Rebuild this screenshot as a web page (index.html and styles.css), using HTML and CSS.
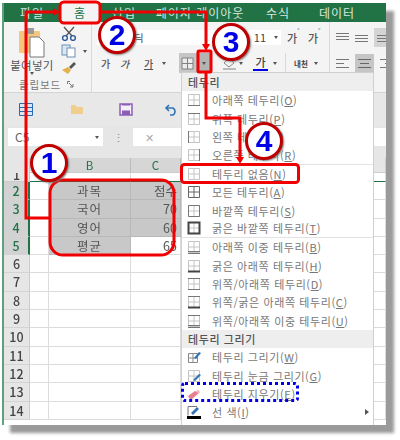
FILE: index.html
```html
<!doctype html>
<html lang="ko">
<head>
<meta charset="utf-8">
<title>테두리 없음</title>
<link rel="stylesheet" href="styles.css">
</head>
<body>
<svg class="defs" width="0" height="0">
  <symbol id="g" viewBox="0 0 14 14"><path d="M1.5 1.5h11v11h-11zM7 1.5v11M1.5 7h11" fill="none" stroke="#c4c4c4"/></symbol>
</svg>
<div class="shot">
  <div class="window">
    <div class="tabs">
      <span class="tab t1">파일</span>
      <span class="tab t2 on">홈</span>
      <span class="tab t3">삽입</span>
      <span class="tab t4">페이지 레이아웃</span>
      <span class="tab t5">수식</span>
      <span class="tab t6">데이터</span>
    </div>
    <div class="ribbon">
      <div class="clip">
        <div class="clip-main">
          <div class="paste">
            <svg width="30" height="30" viewBox="0 0 30 30"><rect x="2" y="3" width="21" height="22" rx="1" fill="#f5c77e"/><rect x="8" y="0" width="9" height="6" fill="#9a9a9a"/><path d="M13 9h9l5 5v15H13z" fill="#fff" stroke="#777"/></svg>
            <span>붙여넣기</span>
            <i class="caret"></i>
          </div>
          <div class="clip-tools">
            <svg width="16" height="15" viewBox="0 0 16 15"><path d="M3 1l8 9M13 1L5 10" stroke="#555" stroke-width="1.3"/><circle cx="4" cy="12" r="2.4" fill="none" stroke="#2b579a" stroke-width="1.4"/><circle cx="12" cy="12" r="2.4" fill="none" stroke="#2b579a" stroke-width="1.4"/></svg>
            <span class="tool-row"><svg width="16" height="14" viewBox="0 0 16 14"><rect x="1" y="1" width="8" height="10" fill="#dce6f2" stroke="#6d8fb5"/><rect x="6" y="4" width="8" height="9" fill="#fff" stroke="#6d8fb5"/></svg><i class="caret"></i></span>
            <svg width="16" height="14" viewBox="0 0 16 14"><path d="M8 6l5-5 2 2-5 5z" fill="#555"/><path d="M1 9l6-3 3 3-3 4z" fill="#e3b04b"/></svg>
          </div>
        </div>
        <div class="clip-name">클립보드<svg width="7" height="7" viewBox="0 0 7 7"><path d="M.5 3V.5H3M2 2l4 4M6 3v3H3" fill="none" stroke="#777"/></svg></div>
      </div>
      <div class="font">
        <div class="font-row">
          <div class="font-name">맑은 고딕</div>
          <div class="font-size">11<i class="caret"></i></div>
          <b class="grow">가<em>˄</em></b>
          <b class="grow">가<em>˅</em></b>
        </div>
        <div class="font-row row2">
          <b class="fmt">가</b>
          <b class="fmt it">가</b>
          <b class="fmt un">가</b>
          <i class="caret"></i>
          <span class="border-btn"><svg width="13" height="13" viewBox="0 0 13 13"><path d="M1 1h11v11H1zM6.500 1v11M1 6.500h11" fill="#ececec" stroke="#808080"/></svg></span>
          <span class="border-drop"><i class="caret"></i></span>
          <span class="fill"><svg width="15" height="13" viewBox="0 0 15 13"><path d="M2 6l5-5 5 5-5 4z" fill="none" stroke="#888"/><rect x="1" y="11" width="13" height="2" fill="#bbb"/></svg><i class="caret"></i></span>
          <b class="color">가</b>
          <i class="caret"></i>
          <span class="sep"></span>
          <span class="phonetic">내천<i class="caret"></i></span>
        </div>
      </div>
      <div class="align">
        <div class="align-row">
          <svg width="13" height="9"><path d="M0 .5h13M0 3.5h13M0 6.5h13" stroke="#777"/></svg>
          <svg width="13" height="9"><path d="M0 2.5h13M0 5.5h13M0 8.5h13" stroke="#777"/></svg>
          <span class="al-on low"><svg width="11" height="9"><path d="M0 2.5h11M0 5.5h11M0 8.5h11" stroke="#777"/></svg></span>
        </div>
        <div class="align-row">
          <svg width="13" height="9"><path d="M0 .5h13M0 4.5h8M0 8.5h13" stroke="#777"/></svg>
          <span class="al-on"><svg width="13" height="9"><path d="M0 .5h13M2 4.5h9M0 8.5h13" stroke="#666"/></svg></span>
          <svg width="11" height="9"><path d="M0 .5h11M5 4.5h6M0 8.5h11" stroke="#777"/></svg>
        </div>
      </div>
    </div>
    <div class="qat">
      <svg class="q1" width="14" height="13" viewBox="0 0 14 13"><path d="M.5.5h13v12H.5zM.5 4.5h13M.5 8.5h13M7 .5v12" fill="#dce6f2" stroke="#2b6cb0"/></svg>
      <svg class="q2" width="15" height="11" viewBox="0 0 15 11"><path d="M1 10V1h4l2 2h6v7z" fill="#f0cf8e"/></svg>
      <svg class="q3" width="14" height="13" viewBox="0 0 14 13"><path d="M1 1h12v11H1z" fill="#f4eefa" stroke="#8a5fb5" stroke-width="1.5"/><rect x="3" y="7.500" width="8" height="4.500" fill="#8a5fb5"/><rect x="3" y="1" width="8" height="1.500" fill="#8a5fb5"/></svg>
      <svg class="q4" width="14" height="12" viewBox="0 0 14 12"><path d="M2 4h7a4 4 0 0 1 0 7H6M5 1L2 4l3 3" fill="none" stroke="#2f75b5" stroke-width="1.600"/></svg>
    </div>
    <div class="formula">
      <div class="name-box">C5<i class="caret"></i></div>
      <span class="dots">⋮</span>
      <div class="fx-box">✕</div>
    </div>
    <div class="sheet">
      <div class="corner"></div><div class="ch"></div><div class="ch sel">B</div><div class="ch sel">C</div><div class="ch"></div>
      <div class="rh first">1</div><div class="c first"></div><div class="c first"></div><div class="c first"></div><div class="c first"></div>
      <div class="rh sel">2</div><div class="c"></div><div class="c hi mid">과목</div><div class="c hi num">점수</div><div class="c"></div>
      <div class="rh sel">3</div><div class="c"></div><div class="c hi mid">국어</div><div class="c hi num">70</div><div class="c"></div>
      <div class="rh sel">4</div><div class="c"></div><div class="c hi mid">영어</div><div class="c hi num">60</div><div class="c"></div>
      <div class="rh sel">5</div><div class="c"></div><div class="c hi mid">평균</div><div class="c num">65</div><div class="c"></div>
      <div class="rh">6</div><div class="c"></div><div class="c"></div><div class="c"></div><div class="c"></div>
      <div class="rh">7</div><div class="c"></div><div class="c"></div><div class="c"></div><div class="c"></div>
      <div class="rh">8</div><div class="c"></div><div class="c"></div><div class="c"></div><div class="c"></div>
      <div class="rh">9</div><div class="c"></div><div class="c"></div><div class="c"></div><div class="c"></div>
      <div class="rh">10</div><div class="c"></div><div class="c"></div><div class="c"></div><div class="c"></div>
      <div class="rh">11</div><div class="c"></div><div class="c"></div><div class="c"></div><div class="c"></div>
      <div class="rh">12</div><div class="c"></div><div class="c"></div><div class="c"></div><div class="c"></div>
      <div class="rh">13</div><div class="c"></div><div class="c"></div><div class="c"></div><div class="c"></div>
      <div class="rh">14</div><div class="c"></div><div class="c"></div><div class="c"></div><div class="c"></div>
    </div>
    <div class="menu">
      <div class="menu-head">테두리</div>
      <div class="item"><svg viewBox="0 0 14 14"><use href="#g"/><path d="M1 12.500h12" stroke="#777"/></svg>아래쪽 테두리(<u>O</u>)</div>
      <div class="item"><svg viewBox="0 0 14 14"><use href="#g"/><path d="M1 1.500h12" stroke="#777"/></svg>위쪽 테두리(<u>P</u>)</div>
      <div class="item"><svg viewBox="0 0 14 14"><use href="#g"/><path d="M1.500 1v12" stroke="#777"/></svg>왼쪽 테두리(<u>L</u>)</div>
      <div class="item line"><svg viewBox="0 0 14 14"><use href="#g"/><path d="M12.500 1v12" stroke="#777"/></svg>오른쪽 테두리(<u>R</u>)</div>
      <div class="item"><svg viewBox="0 0 14 14"><use href="#g"/></svg>테두리 없음(<u>N</u>)</div>
      <div class="item"><svg viewBox="0 0 14 14"><path d="M1.500 1.500h11v11h-11zM7 1.500v11M1.500 7h11" fill="none" stroke="#666"/></svg>모든 테두리(<u>A</u>)</div>
      <div class="item"><svg viewBox="0 0 14 14"><use href="#g"/><path d="M1.500 1.500h11v11h-11z" fill="none" stroke="#777"/></svg>바깥쪽 테두리(<u>S</u>)</div>
      <div class="item line"><svg viewBox="0 0 14 14"><use href="#g"/><path d="M1.500 1.500h11v11h-11z" fill="none" stroke="#444" stroke-width="2"/></svg>굵은 바깥쪽 테두리(<u>T</u>)</div>
      <div class="item"><svg viewBox="0 0 14 14"><use href="#g"/><path d="M1 11.500h12M1 13.500h12" stroke="#777"/></svg>아래쪽 이중 테두리(<u>B</u>)</div>
      <div class="item"><svg viewBox="0 0 14 14"><use href="#g"/><path d="M1 12.500h12" stroke="#444" stroke-width="2"/></svg>굵은 아래쪽 테두리(<u>H</u>)</div>
      <div class="item"><svg viewBox="0 0 14 14"><use href="#g"/><path d="M1 1.500h12M1 12.500h12" stroke="#777"/></svg>위쪽/아래쪽 테두리(<u>D</u>)</div>
      <div class="item"><svg viewBox="0 0 14 14"><use href="#g"/><path d="M1 1.500h12" stroke="#777"/><path d="M1 12.500h12" stroke="#444" stroke-width="2"/></svg>위쪽/굵은 아래쪽 테두리(<u>C</u>)</div>
      <div class="item"><svg viewBox="0 0 14 14"><use href="#g"/><path d="M1 1.500h12M1 11.500h12M1 13.500h12" stroke="#777"/></svg>위쪽/아래쪽 이중 테두리(<u>U</u>)</div>
      <div class="menu-head">테두리 그리기</div>
      <div class="item"><svg viewBox="0 0 14 14"><path d="M1.500 3.500h9v9h-9zM1.500 8h9M6 3.500v9" fill="none" stroke="#888"/><path d="M7 8l5-6 2 1-5 6z" fill="#2f75b5"/></svg>테두리 그리기(<u>W</u>)</div>
      <div class="item"><svg viewBox="0 0 14 14"><use href="#g"/><path d="M6 11l6-6 2 1-6 6z" fill="#2f75b5"/></svg>테두리 눈금 그리기(<u>G</u>)</div>
      <div class="item"><svg viewBox="0 0 14 14"><path d="M1 9l7-5 4 2-7 6H3z" fill="#e8808f"/><path d="M8 4l4-1 1 3-1 0z" fill="#f3b6bf"/></svg>테두리 지우기(<u>E</u>)</div>
      <div class="item last"><svg viewBox="0 0 14 14"><path d="M1 1.500h9M1 1.500v9" fill="none" stroke="#777"/><path d="M4 8l6-6 2 2-6 6z" fill="#2f75b5"/><rect x="0" y="11" width="14" height="3" fill="#000"/></svg>선 색(<u>I</u>)<i class="arrow"></i></div>
    </div>
  </div>

  <svg class="marks" width="400" height="440" viewBox="0 0 400 440">
    <g fill="none" stroke="#f00000" stroke-width="3">
      <path d="M50 218H26V12H54"/>
      <path d="M100 12H206V45"/>
      <path d="M206 72V118H240V158"/>
      <rect x="60" y="2" width="40" height="21" rx="4"/>
      <rect x="198" y="51" width="13" height="21" rx="1"/>
      <rect x="50" y="180" width="124" height="75" rx="13"/>
      <rect x="181.500" y="164.500" width="117" height="18" rx="3"/>
    </g>
    <g fill="#f00000">
      <path d="M60 12l-7-4v8z"/>
      <path d="M206 51l-4-7h8z"/>
      <path d="M240 164l-4-7h8z"/>
    </g>
  </svg>
  <div class="dotted"></div>
  <span class="badge b1">1</span>
  <span class="badge b2">2</span>
  <span class="badge b3">3</span>
  <span class="badge b4">4</span>
</div>
</body>
</html>
```
FILE: styles.css
```css
body{
    margin: 0;
    background-color: #fff;
    font-family: "Noto Sans CJK KR", "Noto Sans", sans-serif;
    color: #444;
}
.defs{
    position: absolute;
}
.shot{
    position: relative;
    width: 400px;
    height: 440px;
    overflow: hidden;
    filter: blur(0.5px);
}
.window{
    position: relative;
    margin: 3px 0 0 2px;
    width: 384px;
    height: 422px;
    display: flex;
    flex-direction: column;
    background-color: #fff;
    border-left: 2px solid #5fa07f;
    box-sizing: border-box;
    box-shadow: 8px 8px 3px #9a9a9a;
    overflow: hidden;
}
.caret{
    display: inline-block;
    flex: none;
    width: 0;
    height: 0;
    border-left: 2.5px solid transparent;
    border-right: 2.5px solid transparent;
    border-top: 3px solid #555;
}

/* tabs */
.tabs{
    height: 19px;
    flex: none;
    display: flex;
    align-items: center;
    background-color: #217346;
    color: #d9e8df;
    font-size: 12px;
    letter-spacing: 1px;
}
.tab{
    line-height: 19px;
    text-align: center;
    white-space: nowrap;
}
.t1{ width: 56px; }
.t2{ width: 40px; background-color: #f3f3f3; color: #217346; }
.t3{ width: 48px; }
.t4{ width: 104px; }
.t5{ width: 52px; }
.t6{ width: 66px; }

/* ribbon */
.ribbon{
    height: 71px;
    flex: none;
    display: flex;
    background-color: #f4f4f4;
    border-bottom: 1px solid #d4d4d4;
    box-sizing: border-box;
}
.clip{
    width: 88px;
    flex: none;
    border-right: 1px solid #d9d9d9;
    box-sizing: border-box;
    display: flex;
    flex-direction: column;
}
.clip-main{
    display: flex;
    height: 56px;
}
.paste{
    width: 52px;
    margin-left: 2px;
    padding-top: 6px;
    display: flex;
    flex-direction: column;
    align-items: center;
    font-size: 11.500px;
    letter-spacing: 0.3px;
    line-height: 14px;
    color: #555;
}
.paste span{
    white-space: nowrap;
}
.clip-tools{
    padding: 4px 0 0 3px;
    display: flex;
    flex-direction: column;
    gap: 3px;
}
.tool-row{
    display: flex;
    align-items: center;
    gap: 6px;
}
.clip-name{
    font-size: 10.500px;
    color: #777;
    display: flex;
    align-items: center;
    padding-left: 15px;
    gap: 6px;
    line-height: 13px;
    letter-spacing: 0.8px;
}
.font{
    width: 238px;
    flex: none;
    border-right: 1px solid #d9d9d9;
    box-sizing: border-box;
    padding: 7px 0 0 5px;
    display: flex;
    flex-direction: column;
    gap: 7px;
}
.font-row{
    display: flex;
    align-items: center;
    height: 17px;
}
.font-name{
    width: 110px;
    height: 15px;
    line-height: 15px;
    background-color: #fff;
    font-size: 10.500px;
    padding-left: 5px;
    box-sizing: border-box;
}
.font-size{
    width: 74px;
    height: 15px;
    line-height: 15px;
    background-color: #fff;
    font-size: 11px;
    box-sizing: border-box;
    padding-right: 3px;
    margin-right: 6px;
    display: flex;
    justify-content: flex-end;
    align-items: center;
    gap: 8px;
}
.grow{
    width: 21px;
    font-size: 11px;
    font-weight: 500;
    color: #555;
    position: relative;
}
.grow em{
    position: absolute;
    left: 10px;
    top: -5px;
    font-style: normal;
    font-size: 9px;
    color: #2f75b5;
}
.row2{
    height: 20px;
}
.fmt{
    font-size: 10px;
    font-weight: 500;
    color: #555;
    margin-left: 4px;
    width: 15px;
}
.it{
    font-style: italic;
    margin-left: 4px;
}
.un{
    text-decoration: underline;
    margin-left: 9px;
    margin-right: 3px;
}
.border-btn{
    width: 17px;
    height: 20px;
    margin-left: 13px;
    background-color: #c6c6c6;
    display: flex;
    align-items: center;
    justify-content: center;
}
.border-drop{
    width: 15px;
    height: 20px;
    background-color: #b4b4b4;
    display: flex;
    align-items: center;
    justify-content: center;
}
.fill{
    margin-left: 11px;
    display: flex;
    align-items: center;
    gap: 2px;
}
.color{
    margin-left: 10px;
    margin-right: 5px;
    font-size: 11px;
    font-weight: 500;
    border-bottom: 2px solid #0000e0;
    line-height: 13px;
    width: 15px;
    text-align: center;
}
.sep{
    width: 1px;
    height: 20px;
    background-color: #d9d9d9;
    margin: 0 8px;
}
.phonetic{
    font-size: 7.500px;
    font-weight: 700;
    display: flex;
    align-items: center;
    gap: 6px;
    white-space: nowrap;
}
.align{
    flex: 1;
    padding: 6px 0 0 6px;
    display: flex;
    flex-direction: column;
    gap: 8px;
}
.align-row{
    display: flex;
    align-items: center;
    gap: 6px;
    height: 18px;
    white-space: nowrap;
}
.al-on{
    height: 19px;
    padding: 0 3px;
    background-color: #c6c6c6;
    display: flex;
    align-items: center;
}
.low{
    background-color: #d4d4d4;
}

/* quick access bar */
.qat{
    height: 33px;
    flex: none;
    position: relative;
    display: flex;
    align-items: center;
    background-color: #e8e8e8;
}
.q1{ margin-left: 15px; }
.q2{ margin-left: 37px; }
.q3{ margin-left: 34px; }
.q4{ margin-left: 31px; }

/* formula bar */
.formula{
    height: 32px;
    flex: none;
    display: flex;
    background-color: #e6e6e6;
    padding: 2px 0 0 4px;
    box-sizing: border-box;
}
.name-box{
    width: 95px;
    height: 18px;
    line-height: 18px;
    background-color: #fff;
    font-size: 12px;
    color: #666;
    padding: 0 4px 0 7px;
    box-sizing: border-box;
    display: flex;
    justify-content: space-between;
    align-items: center;
}
.dots{
    width: 30px;
    text-align: center;
    font-size: 11px;
    line-height: 18px;
    color: #888;
}
.fx-box{
    flex: 1;
    height: 18px;
    line-height: 18px;
    background-color: #fff;
    padding-left: 12px;
    font-size: 11px;
    color: #aaa;
}

/* sheet */
.sheet{
    flex: 1;
    display: grid;
    grid-template-columns: 26px 19px 82px 50px 1fr;
    grid-template-rows: 15px 9px repeat(13, 18.300px);
    font-size: 12.500px;
    color: #555;
    overflow: hidden;
}
.corner{
    background-color: #e6e6e6;
    border-right: 1px solid #ccc;
}
.ch{
    background-color: #e6e6e6;
    border-right: 1px solid #ccc;
    border-bottom: 1px solid #ccc;
    text-align: center;
    font-size: 11.500px;
    line-height: 14px;
}
.ch.sel{
    background-color: #d6d6d6;
    color: #217346;
    border-right-color: #bbb;
}
.rh{
    background-color: #e6e6e6;
    border-right: 1px solid #ccc;
    border-bottom: 1px solid #d4d4d4;
    text-align: center;
    font-size: 12.500px;
    font-weight: 500;
    line-height: 18px;
    color: #444;
    box-sizing: border-box;
    overflow: hidden;
}
.rh.first{
    line-height: 3px;
    border-bottom-color: #ccc;
}
.rh.sel{
    background-color: #d2d2d2;
    color: #217346;
    border-right: 2px solid #217346;
}
.c{
    border-right: 1px solid #dcdcdc;
    border-bottom: 1px solid #dcdcdc;
    box-sizing: border-box;
    line-height: 18px;
    padding: 0 3px;
    overflow: hidden;
    white-space: nowrap;
}
.c.first{
    border-bottom: 1px solid #217346;
}
.hi{
    background-color: #c8c8c8;
    border-color: #b8b8b8;
}
.mid{
    text-align: center;
    letter-spacing: 1px;
}
.num{
    text-align: right;
}

/* dropdown menu */
.menu{
    position: absolute;
    left: 177px;
    top: 69px;
    width: 193px;
    height: 353px;
    box-sizing: border-box;
    background-color: #fff;
    border: 1px solid #d0d0d0;
    border-bottom: 0;
    font-size: 11px;
    letter-spacing: 0.6px;
    color: #777;
}
.menu-head{
    height: 18px;
    line-height: 18px;
    padding-left: 6px;
    background-color: #eeeeee;
    color: #555;
    font-weight: 500;
}
.item{
    height: 18.400px;
    line-height: 18px;
    display: flex;
    align-items: center;
    padding-left: 5px;
    position: relative;
    white-space: nowrap;
}
.item svg{
    width: 14px;
    height: 14px;
    margin-right: 11px;
    flex: none;
}
.item u{
    text-underline-offset: 1px;
}
.line{
    border-bottom: 1px solid #e2e2e2;
    box-sizing: content-box;
    height: 17.400px;
}
.arrow{
    position: absolute;
    right: 4px;
    top: 6px;
    border-left: 4px solid #555;
    border-top: 3px solid transparent;
    border-bottom: 3px solid transparent;
}

/* annotations */
.marks{
    position: absolute;
    left: 0;
    top: 0;
}
.dotted{
    position: absolute;
    left: 181px;
    top: 382px;
    width: 118px;
    height: 20px;
    box-sizing: border-box;
    border: 3px dotted #0000e6;
    border-radius: 4px;
}
.badge{
    position: absolute;
    width: 38px;
    height: 38px;
    box-sizing: border-box;
    border: 3px solid #c00000;
    border-radius: 50%;
    background-color: #fff;
    box-shadow: 1px 1px 2px #777;
    color: #0000e6;
    font-family: "Liberation Sans", sans-serif;
    font-weight: 700;
    font-size: 30px;
    line-height: 32px;
    text-align: center;
}
.b1{ left: 30px; top: 144px; }
.b2{ left: 98px; top: 16px; }
.b3{ left: 212px; top: 23px; }
.b4{ left: 245px; top: 122px; }
```
